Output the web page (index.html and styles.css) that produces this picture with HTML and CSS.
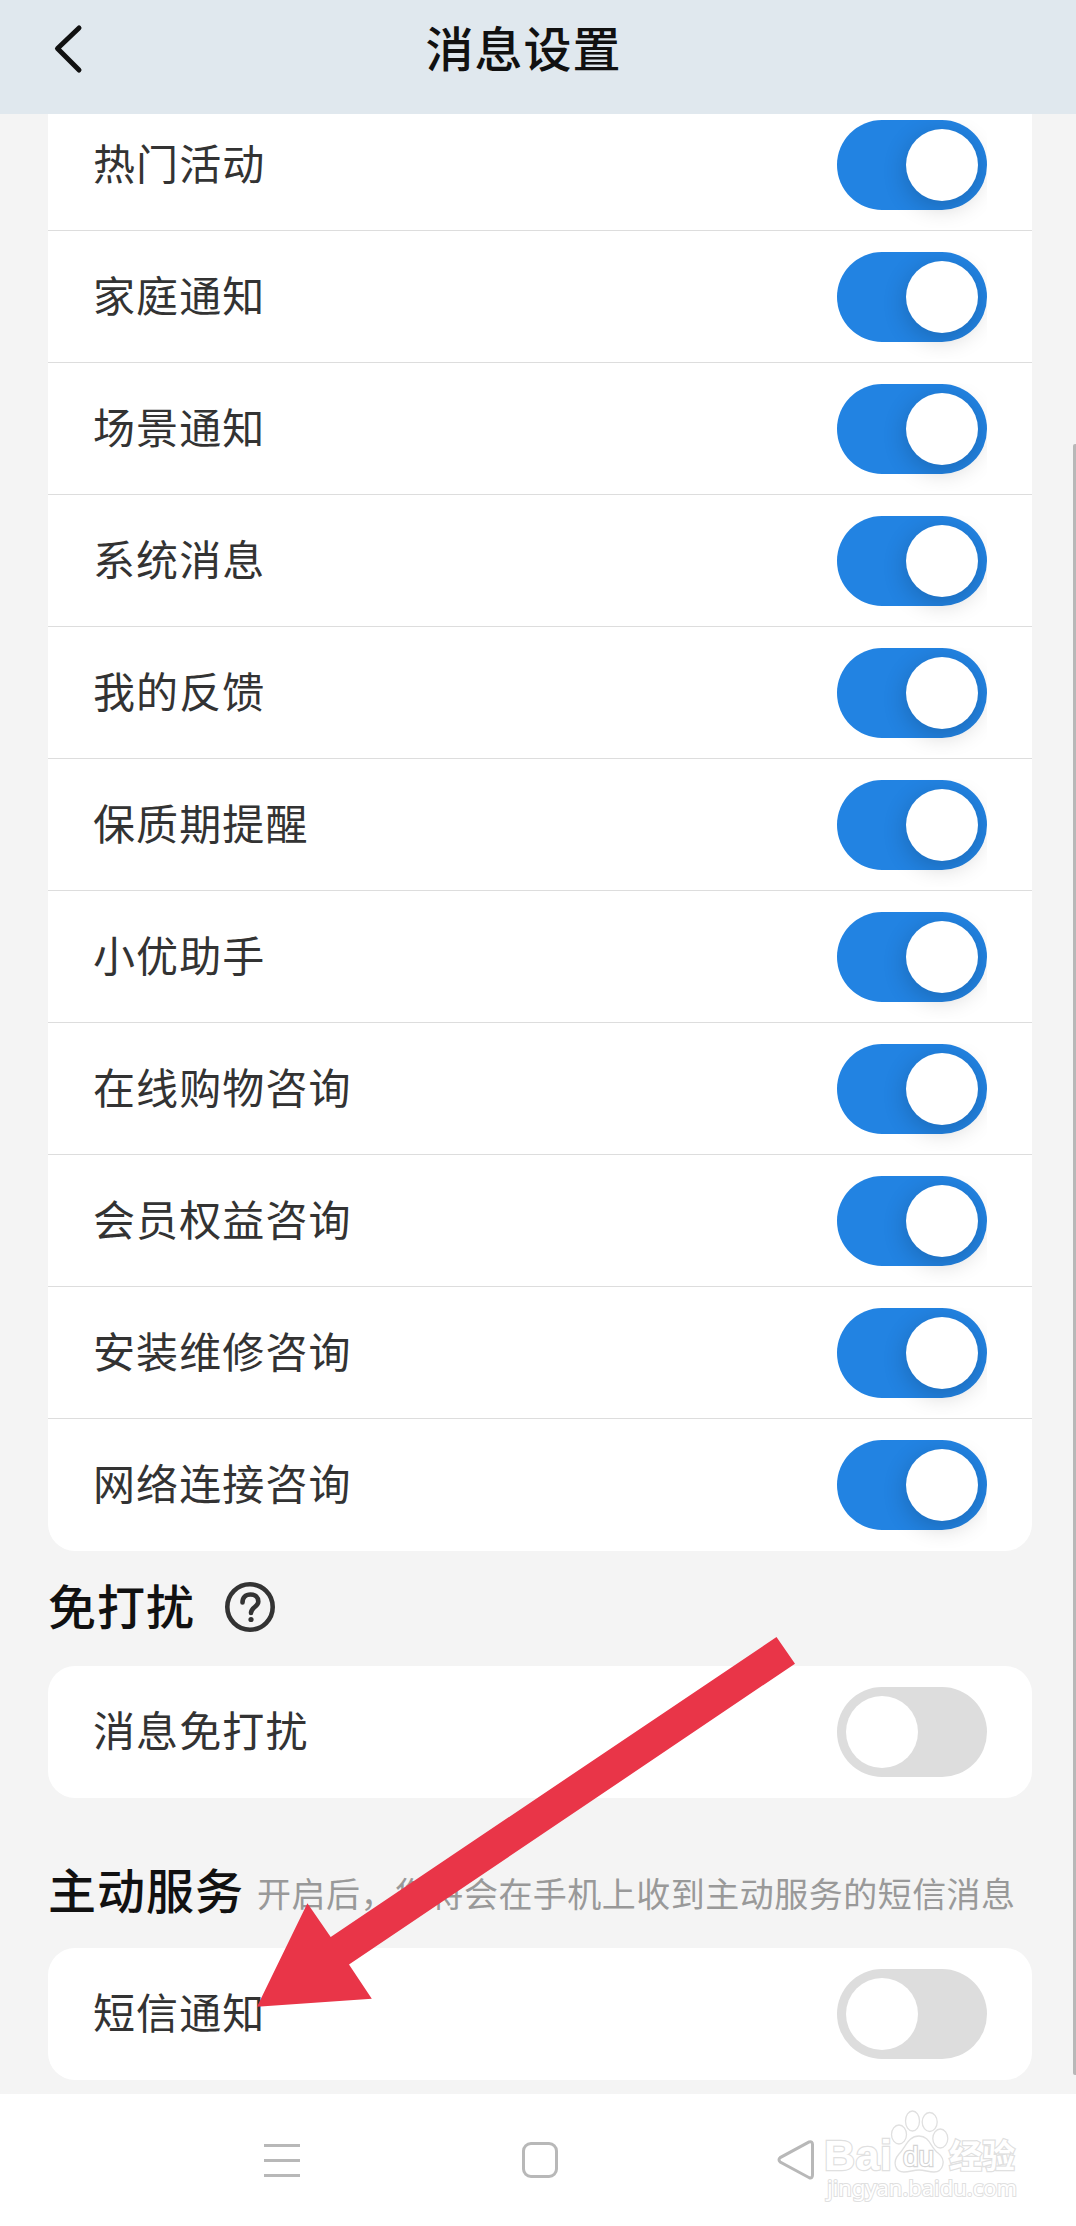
FILE: index.html
```html
<!DOCTYPE html>
<html lang="zh-CN">

<head>
    <meta charset="UTF-8">
    <meta name="viewport" content="width=device-width, initial-scale=1.0">
    <title>消息设置</title>
    <link rel="stylesheet" href="styles.css">
</head>

<body>
    <header class="header">
        <svg class="back" width="34" height="54" viewBox="0 0 34 54">
            <path d="M29 7L7.5 27.5L29 49" />
        </svg>
        <h1 class="title">消息设置</h1>
    </header>

    <main class="content">
        <div class="card card-top">
            <div class="row"><span class="label">热门活动</span><span class="switch on"></span></div>
            <div class="row"><span class="label">家庭通知</span><span class="switch on"></span></div>
            <div class="row"><span class="label">场景通知</span><span class="switch on"></span></div>
            <div class="row"><span class="label">系统消息</span><span class="switch on"></span></div>
            <div class="row"><span class="label">我的反馈</span><span class="switch on"></span></div>
            <div class="row"><span class="label">保质期提醒</span><span class="switch on"></span></div>
            <div class="row"><span class="label">小优助手</span><span class="switch on"></span></div>
            <div class="row"><span class="label">在线购物咨询</span><span class="switch on"></span></div>
            <div class="row"><span class="label">会员权益咨询</span><span class="switch on"></span></div>
            <div class="row"><span class="label">安装维修咨询</span><span class="switch on"></span></div>
            <div class="row"><span class="label">网络连接咨询</span><span class="switch on"></span></div>
        </div>

        <div class="section section-quiet">
            <h2 class="heading">免打扰</h2>
            <svg class="help" width="52" height="52" viewBox="0 0 52 52">
                <circle cx="26" cy="26" r="22.7" />
                <path d="M18.5 21.5C18.5 16.5 21.5 13.5 26.5 13.5C31.5 13.5 34.3 16.5 34.3 20.5C34.3 26 27 26 27 32" />
                <circle class="dot" cx="27" cy="38.5" r="2.6" />
            </svg>
        </div>
        <div class="card">
            <div class="row"><span class="label">消息免打扰</span><span class="switch"></span></div>
        </div>

        <div class="section section-service">
            <h2 class="heading">主动服务</h2>
            <span class="hint">开启后，您将会在手机上收到主动服务的短信消息</span>
        </div>
        <div class="card">
            <div class="row"><span class="label">短信通知</span><span class="switch"></span></div>
        </div>
    </main>

    <nav class="navbar">
        <svg width="38" height="42" viewBox="0 0 38 42">
            <path d="M1 6.5H37M1 21.5H37M1 36.5H37" />
        </svg>
        <svg width="38" height="42" viewBox="0 0 38 42">
            <rect x="2.5" y="4.5" width="33" height="33" rx="7.5" />
        </svg>
        <svg width="38" height="42" viewBox="0 0 38 42">
            <path d="M30.2 2.9L1.2 18.6Q-1.2 20.8 1.2 23L30.2 38.7Q33.5 39.6 33.5 36V5.6Q33.5 2 30.2 2.9Z" />
        </svg>
    </nav>

    <div class="scrollbar"></div>

    <svg class="arrow" width="540" height="372" viewBox="256 1636 540 372">
        <polygon points="776.5,1637 795,1663.7 349,1964.6 371.8,1998.7 257,2006.8 307.4,1903.3 330.7,1937" />
    </svg>

    <svg class="watermark" width="206" height="100" viewBox="820 2106 206 100">
        <ellipse cx="899" cy="2134.5" rx="7.5" ry="9.5" />
        <ellipse cx="912.5" cy="2121" rx="7" ry="10" />
        <ellipse cx="929.7" cy="2122" rx="7.5" ry="9.5" />
        <ellipse cx="940.3" cy="2138.5" rx="7.5" ry="9.5" />
        <path d="M919 2136C930 2136 930 2147 938 2153C947 2160 943 2172 934 2172C928 2172 925 2170 919 2170C913 2170 910 2172 904 2172C895 2172 892 2162 899 2154C906 2147 908 2136 919 2136Z" />
        <text class="brand" x="824" y="2170" textLength="68">Bai</text>
        <text class="du" x="903" y="2166" textLength="31">du</text>
        <text class="cn" x="949" y="2168" textLength="66">经验</text>
        <text class="url" x="827" y="2196" textLength="190" lengthAdjust="spacingAndGlyphs">jingyan.baidu.com</text>
    </svg>
</body>

</html>
```

FILE: styles.css
```css
* {
    box-sizing: border-box;
}

body {
    margin: 0;
    position: relative;
    height: 2226px;
    display: flex;
    flex-direction: column;
    overflow: hidden;
    background: #f4f4f4;
    font-family: "Noto Sans CJK SC", sans-serif;
    color: #333;
}

.header {
    height: 114px;
    flex: none;
    display: flex;
    align-items: center;
    padding: 0 50px 18px;
    background: #e0e8ee;
}

.back {
    fill: none;
    stroke: #111;
    stroke-width: 5;
    stroke-linecap: round;
    stroke-linejoin: round;
}

.title {
    flex: 1;
    margin: 0 63px 5px 0;
    text-align: center;
    font-size: 48px;
    line-height: 70px;
    font-weight: 500;
    letter-spacing: 1px;
    color: #111;
}

.content {
    flex: 1;
    padding: 0 44px 0 48px;
}

.card {
    background: #fff;
    border-radius: 27px;
}

.card-top {
    border-radius: 0 0 27px 27px;
}

.row {
    height: 132px;
    display: flex;
    align-items: center;
    justify-content: space-between;
    padding: 0 45px;
    border-bottom: 1px solid #ddd;
}

.row:last-child {
    border-bottom: none;
}

/* first row is scrolled partly under the header */
.card-top .row:first-child {
    height: 117px;
    padding-bottom: 14px;
}

.label {
    padding-bottom: 6px;
    font-size: 42px;
    line-height: 60px;
    letter-spacing: 1.1px;
}

.switch {
    width: 150px;
    height: 90px;
    padding: 9px;
    display: flex;
    border-radius: 45px;
    background: #ddd;
    clip-path: inset(0 0 -18px 0);
}

.switch::before {
    content: "";
    width: 72px;
    height: 72px;
    border-radius: 50%;
    background: #fff;
}

.switch.on {
    justify-content: flex-end;
    background: #2283e2;
}

.switch.on::before {
    box-shadow: 0 6px 24px rgba(0, 0, 0, 0.2);
}

.section {
    display: flex;
    align-items: center;
}

.section-quiet {
    height: 115px;
    padding-bottom: 4px;
}

.section-service {
    height: 150px;
    padding-top: 36px;
}

.heading {
    margin: 0;
    padding-bottom: 6px;
    font-size: 48px;
    line-height: 70px;
    font-weight: 500;
    letter-spacing: 1px;
    color: #111;
}

.help {
    margin-left: 29px;
    fill: none;
    stroke: #333;
    stroke-width: 4.6;
    stroke-linecap: round;
}

.help .dot {
    fill: #333;
    stroke: none;
}

.hint {
    margin: 3px 0 0 13px;
    font-size: 34px;
    letter-spacing: 0.48px;
    white-space: nowrap;
    color: #999;
}

.navbar {
    height: 132px;
    flex: none;
    display: flex;
    align-items: center;
    gap: 220px;
    padding: 0 0 0 263px;
    background: #fff;
}

.navbar svg {
    fill: none;
    stroke: #b8b8b8;
    stroke-width: 3;
    overflow: visible;
}

.scrollbar {
    position: absolute;
    top: 444px;
    right: 0;
    width: 3px;
    height: 1631px;
    border-radius: 2px 0 0 2px;
    background: #b8b8b8;
}

.arrow {
    position: absolute;
    top: 1636px;
    left: 256px;
    fill: #e93548;
}

.watermark {
    position: absolute;
    top: 2106px;
    left: 820px;
    fill: #fff;
    stroke: #e0e0e0;
    stroke-width: 1.3;
}

.watermark text {
    font-family: "Liberation Sans", "Noto Sans CJK SC", sans-serif;
    paint-order: stroke;
    stroke-width: 2.4;
}

.brand {
    font-size: 43px;
    font-weight: bold;
}

.watermark .du {
    font-size: 28px;
    stroke: #d4d4d4;
}

.cn {
    font-size: 33px;
    font-weight: bold;
}

.watermark .url {
    font-family: "Noto Sans", sans-serif;
    font-size: 22px;
    stroke-width: 2;
}
```
